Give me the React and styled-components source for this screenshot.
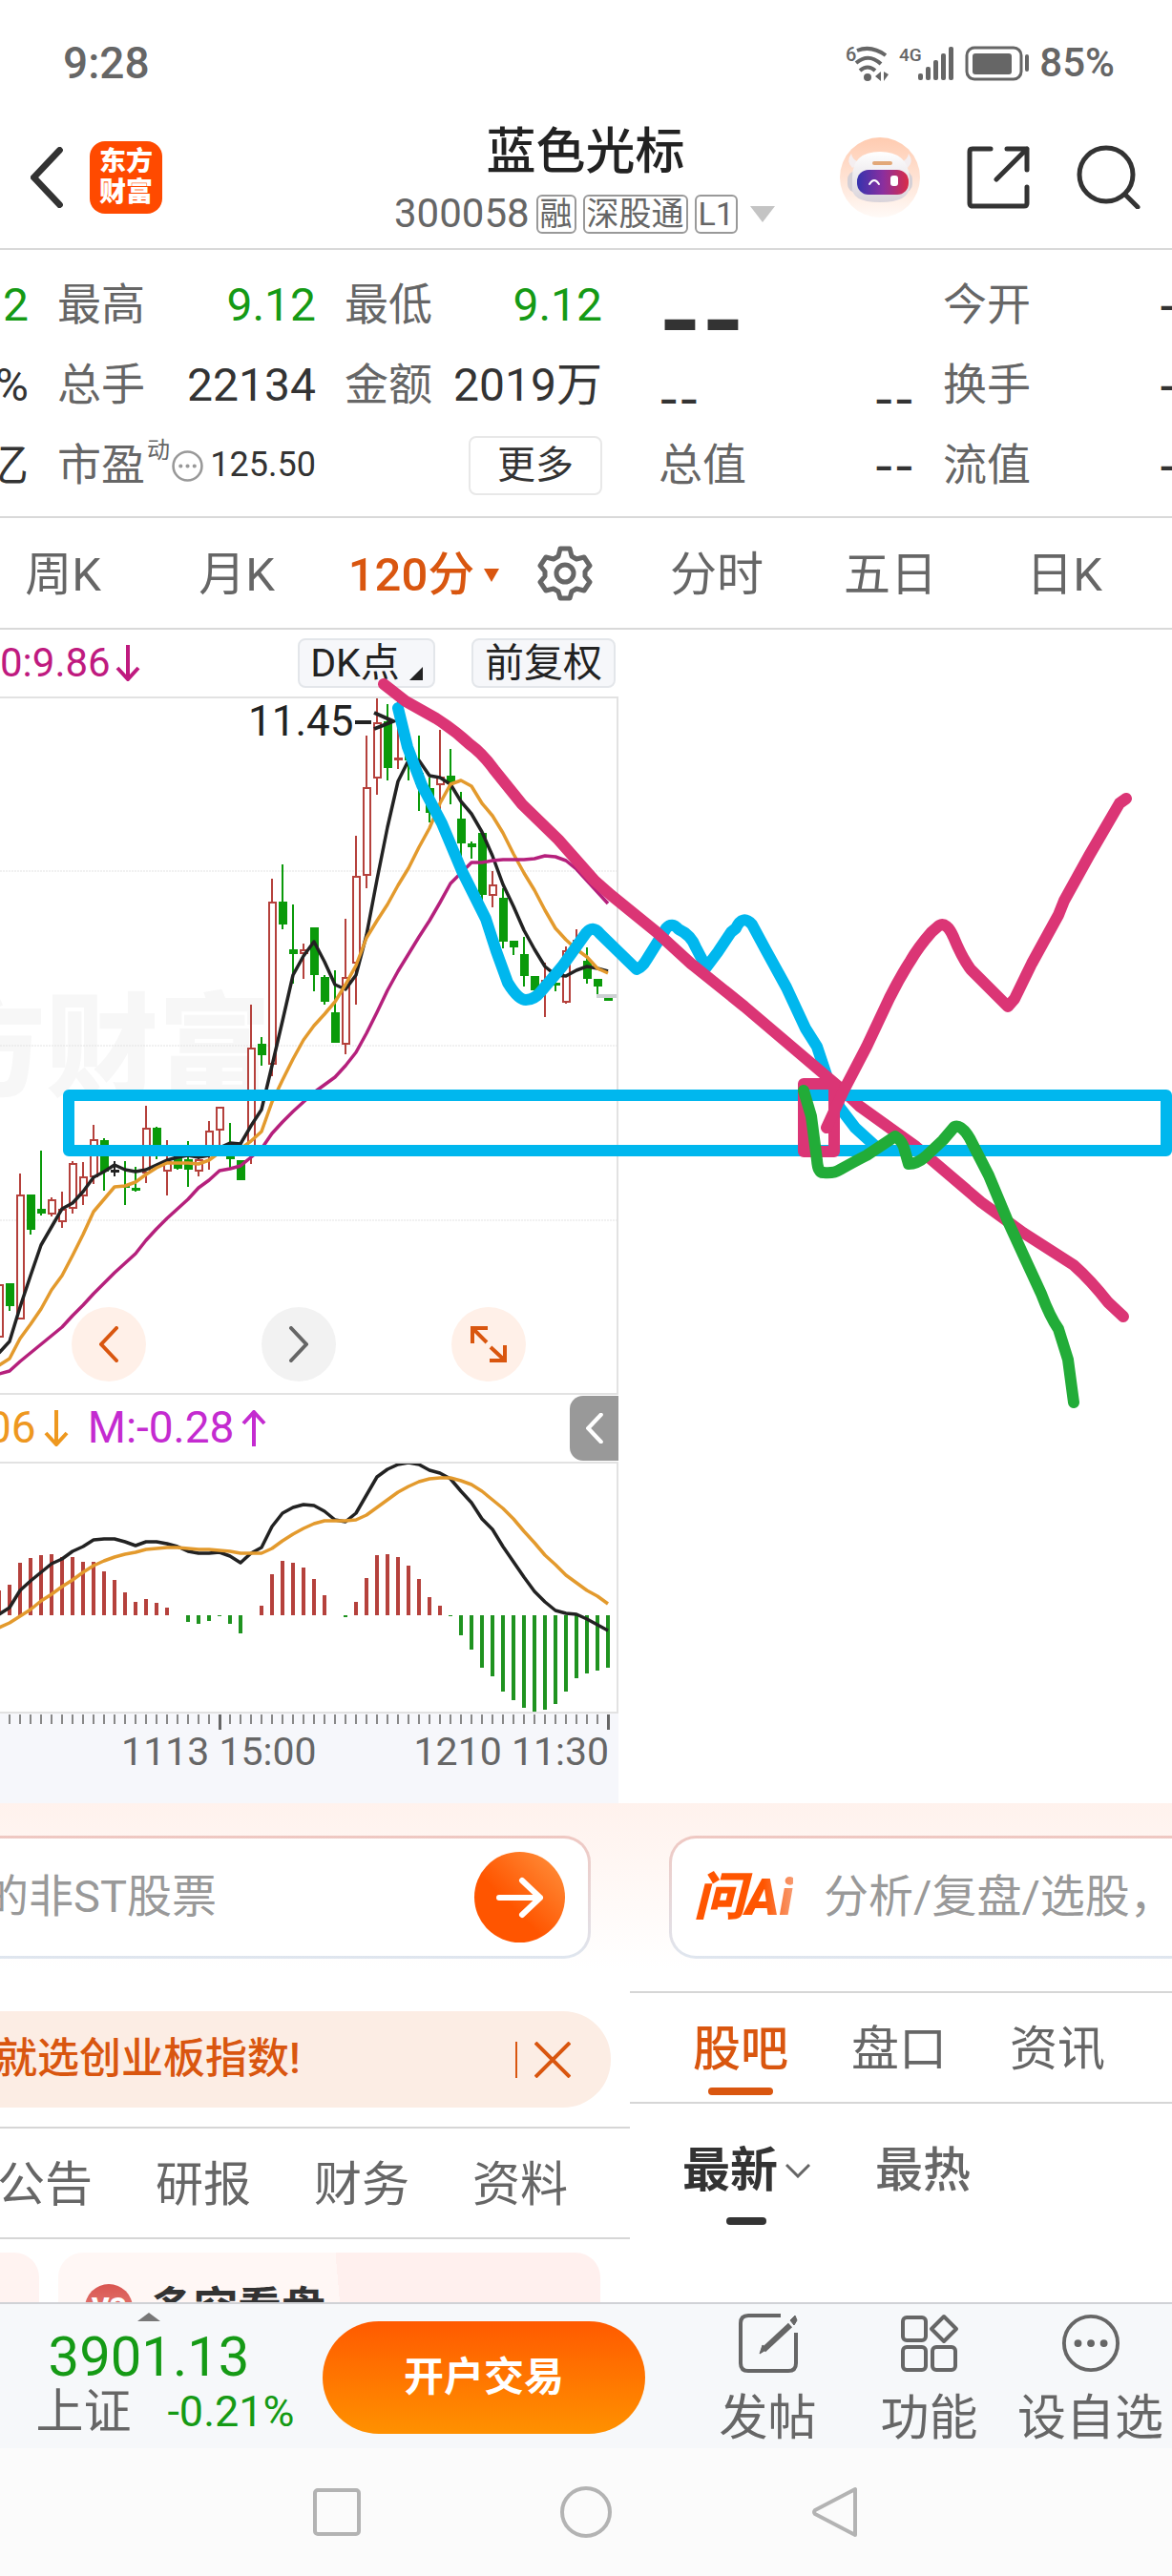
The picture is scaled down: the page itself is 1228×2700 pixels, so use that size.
import React from "react";
import styled, { createGlobalStyle } from "styled-components";

const GlobalStyle = createGlobalStyle`
  * {
    box-sizing: border-box;
  }

  body {
    margin: 0;
    background: #fff;
    color: #333;
    font-family: Roboto, "Noto Sans CJK SC", sans-serif;
    line-height: 1.2;
  }

  button,
  input {
    margin: 0;
    padding: 0;
    border: 0;
    background: none;
    color: inherit;
    font: inherit;
  }

  svg {
    display: block;
    flex-shrink: 0;
  }
`;

const Page = styled.div`
  overflow: hidden;
`;

const StatusBar = styled.div`
  display: flex;
  align-items: center;
  justify-content: space-between;
  height: 111px;
  padding: 22px 60px 0 66px;
  color: #666;
  font-size: 46px;
  font-weight: 500;
`;

const StatusIcons = styled.div`
  display: flex;
  align-items: center;
  gap: 10px;
  font-size: 42px;
`;

const Header = styled.header`
  display: grid;
  grid-template-columns: 1fr auto 1fr;
  align-items: center;
  height: 151px;
  padding: 0 33px 0 32px;
  border-bottom: 2px solid #d9d9d9;
`;

const HeaderSide = styled.div`
  display: flex;
  align-items: center;
  justify-content: ${(props) => (props.$end ? "flex-end" : "flex-start")};
  gap: ${(props) => (props.$end ? "49px" : "28px")};
`;

const IconButton = styled.button`
  display: flex;
  align-items: center;
  justify-content: center;
`;

const AppLogo = styled.a`
  width: 76px;
  padding: 6px 0;
  border-radius: 16px;
  background: #ff4a00;
  color: #fff;
  font-size: 28px;
  font-weight: 900;
  line-height: 32px;
  text-align: center;
  text-decoration: none;
`;

const StockTitle = styled.div`
  padding-top: 12px;

  h1 {
    margin: 0;
    color: #222;
    font-size: 52px;
    font-weight: 500;
    line-height: 66px;
    text-align: center;
  }
`;

const StockCode = styled.div`
  display: flex;
  align-items: center;
  gap: 7px;
  height: 64px;
  color: #666;
  font-size: 42px;
`;

const Tag = styled.span`
  padding: 0 2px;
  border: 2px solid #999;
  border-radius: 6px;
  font-size: 34px;
  line-height: 37px;
`;

const Columns = styled.div`
  display: grid;
  grid-template-columns: minmax(0, 660fr) minmax(0, 568fr);
`;

const Quotes = styled(Columns)`
  padding: 16px 0 11px;
  border-bottom: 2px solid #d9d9d9;
`;

const QuoteGrid = styled.dl`
  display: grid;
  grid-template-columns: ${(props) => props.$columns};
  grid-auto-rows: 84px;
  column-gap: 30px;
  margin: 0;
  padding-left: ${(props) => props.$indent || "0"};
`;

const Quote = styled.div`
  display: flex;
  align-items: center;
  justify-content: ${(props) => (props.$end ? "flex-end" : "space-between")};
  white-space: nowrap;

  dt {
    display: flex;
    align-items: center;
    color: #666;
    font-size: 46px;
  }

  dd {
    margin: 0;
    color: ${(props) => (props.$down ? "#159a15" : "#333")};
    font-size: ${(props) => (props.$small ? "36px" : "48px")};
  }
`;

const Sup = styled.sup`
  align-self: flex-start;
  margin: 0 2px;
  font-size: 24px;
  line-height: 24px;
`;

const Dash = styled.dd`
  && {
    align-self: ${(props) => (props.$low ? "flex-end" : "center")};
    font-family: Inter, sans-serif;
    font-size: ${(props) => (props.$big ? "96px" : "46px")};
    font-weight: ${(props) => (props.$big ? "700" : "500")};
    line-height: 56px;
  }
`;

const MoreCell = styled.dd`
  display: flex;
  align-items: center;
  justify-content: flex-end;
  margin: 0;
`;

const MoreButton = styled.button`
  width: 140px;
  height: 62px;
  border: 2px solid #e8e8e8;
  border-radius: 8px;
  color: #333;
  font-size: 40px;
`;

const PeriodBar = styled(Columns)`
  height: 117px;
  border-bottom: 2px solid #d9d9d9;
`;

const PeriodGroup = styled.nav`
  display: flex;
  align-items: center;
  margin-left: ${(props) => (props.$cut ? "-25px" : "0")};
`;

const Period = styled.button`
  display: flex;
  align-items: center;
  justify-content: center;
  gap: 10px;
  flex: 0 0 ${(props) => (props.$active ? "210px" : "182px")};
  padding-top: 5px;
  color: ${(props) => (props.$active ? "#d9560f" : "#666")};
  font-size: 49px;
  font-weight: ${(props) => (props.$active ? "500" : "400")};
`;

const GearButton = styled(IconButton)`
  margin-left: 14px;
`;

const ChartArea = styled.section`
  position: relative;
`;

const ChartPane = styled.div`
  padding-right: 12px;
`;

const ChartTools = styled.div`
  display: flex;
  align-items: center;
  height: 70px;
  padding-right: 3px;
`;

const Indicator = styled.span`
  display: flex;
  align-items: center;
  gap: ${(props) => (props.$tight ? "5px" : "8px")};
  color: ${(props) => props.$color};
  font-size: ${(props) => (props.$tight ? "42px" : "46px")};
`;

const ToolButton = styled.button`
  display: flex;
  align-items: flex-end;
  justify-content: center;
  gap: 10px;
  width: ${(props) => props.$width};
  height: 52px;
  margin-left: ${(props) => props.$gap};
  border: 2px solid #e3e6ea;
  border-radius: 8px;
  background: #f6f7fa;
  color: #222;
  font-size: 41px;
  line-height: 48px;

  svg {
    margin-bottom: 6px;
  }
`;

const PricePlot = styled.div`
  position: relative;
  border: solid #e2e2e2;
  border-width: 2px 2px 2px 0;
`;

const PlotButtons = styled.div`
  position: absolute;
  bottom: 12px;
  left: 75px;
  display: flex;
  gap: 121px;
`;

const PlotButton = styled(IconButton)`
  width: 78px;
  height: 78px;
  border-radius: 50%;
  background: ${(props) => (props.$muted ? "#f2f2f2" : "#fff0e8")};
`;

const MacdHead = styled.div`
  display: flex;
  align-items: center;
  gap: 20px;
  height: 70px;
  margin-left: -14px;
`;

const CollapseButton = styled(IconButton)`
  width: 51px;
  height: 68px;
  margin-left: auto;
  border-radius: 14px 0 0 14px;
  background: #999;
`;

const MacdPlot = styled.div`
  border: solid #e2e2e2;
  border-width: 2px 2px 2px 0;
`;

const Axis = styled.div`
  height: 94px;
  background: #f6f7fb;
`;

const AxisLabels = styled.div`
  display: flex;
  justify-content: flex-end;
  gap: 102px;
  padding-right: 10px;
  color: #666;
  font-size: 41px;
  line-height: 44px;
`;

const Annotations = styled.svg`
  position: absolute;
  top: 0;
  left: 0;
  width: 100%;
  height: 100%;
  pointer-events: none;
`;

const AskArea = styled(Columns)`
  background: linear-gradient(#fff2ed, #fff 174px);
`;

const AskBox = styled.label`
  display: flex;
  align-items: center;
  gap: 32px;
  height: 129px;
  margin: ${(props) => (props.$cut ? "34px 41px 34px -60px" : "34px -60px 34px 41px")};
  padding: ${(props) => (props.$cut ? "0 24px 0 40px" : "0 24px 0 23px")};
  border: 3px solid transparent;
  border-radius: 28px;
  background: linear-gradient(#fff, #fff) padding-box,
    linear-gradient(#efc8c2, #dfe6ef) border-box;

  input {
    flex: 1;
    min-width: 0;
    font-size: 47px;
    outline: none;
  }

  input::placeholder {
    color: #999;
    opacity: 1;
  }
`;

const SendButton = styled(IconButton)`
  width: 95px;
  height: 95px;
  border-radius: 50%;
  background: linear-gradient(45deg, #ff5500 40%, #ff9440);
`;

const AskLogo = styled.span`
  background: linear-gradient(90deg, #ff5500 70%, #f79a70);
  background-clip: text;
  color: transparent;
  font-size: 54px;
  font-style: italic;
  font-weight: 900;
  line-height: 70px;
`;

const NewsArea = styled(Columns)`
  height: 326px;
  overflow: hidden;
`;

const LeftNews = styled.div`
  padding-top: 21px;
`;

const Notice = styled.div`
  display: flex;
  align-items: center;
  height: 101px;
  margin: 0 20px 20px -60px;
  padding: 0 42px 0 55px;
  border-radius: 50px;
  background: #fcede4;
  color: #d9560f;
  font-size: 44px;
  font-weight: 500;
  white-space: nowrap;
`;

const NoticeClose = styled(IconButton)`
  margin-left: auto;
  padding-left: 18px;
  border-left: 2px solid #d9560f;
`;

const TabRow = styled.nav`
  display: flex;
  gap: 66px;
  height: 118px;
  margin-left: ${(props) => (props.$cut ? "-3px" : "0")};
  padding-left: ${(props) => (props.$cut ? "0" : "66px")};
  border: solid #d6d6d6;
  border-width: 2px 0;
`;

const TabCell = styled.a`
  display: flex;
  flex-direction: column;
  align-items: center;
  justify-content: space-between;
  flex-shrink: 0;
  padding: 25px 0 7px;
  color: ${(props) => (props.$active ? "#d9560f" : "#666")};
  font-size: 50px;
  font-weight: ${(props) => (props.$active ? "500" : "400")};
  line-height: 68px;
  text-decoration: none;
  white-space: nowrap;

  &::after {
    content: "";
    width: 68px;
    height: 8px;
    border-radius: 4px;
    background: ${(props) => (props.$active ? "#d9560f" : "transparent")};
  }
`;

const SortRow = styled.div`
  display: flex;
  gap: 68px;
  padding: 34px 0 0 55px;
`;

const SortButton = styled.button`
  display: flex;
  flex-direction: column;
  align-items: center;
  gap: 13px;
  color: ${(props) => (props.$active ? "#333" : "#666")};
  font-size: 50px;
  font-weight: ${(props) => (props.$active ? "700" : "500")};
  line-height: 72px;

  span {
    display: flex;
    align-items: center;
    gap: 8px;
  }

  &::after {
    content: "";
    width: 42px;
    height: 8px;
    border-radius: 4px;
    background: ${(props) => (props.$active ? "#333" : "transparent")};
  }
`;

const CardRow = styled.div`
  display: flex;
  gap: 20px;
  margin: 14px 31px 0 -100px;
`;

const Card = styled.article`
  display: flex;
  align-items: center;
  gap: 18px;
  flex: ${(props) => (props.$wide ? "1" : "0 0 141px")};
  height: 116px;
  padding: 0 28px;
  border-radius: 26px;
  background: ${(props) =>
    props.$wide ? "linear-gradient(85deg, #fff7f5 52%, #fff0ee 52%)" : "#fff3f1"};
  color: #333;

  h2 {
    margin: 0;
    font-size: 46px;
    font-weight: 700;
    line-height: 60px;
  }
`;

const VsBadge = styled.span`
  width: 50px;
  height: 50px;
  border-radius: 50%;
  background: linear-gradient(#d95550, #e8908a);
  color: #fff;
  font-size: 28px;
  font-weight: 900;
  line-height: 50px;
  text-align: center;
`;

const ActionBar = styled.footer`
  display: grid;
  grid-template-columns: 312px 338px minmax(0, 1fr);
  column-gap: 26px;
  height: 153px;
  border-top: 2px solid #d0d2d6;
  background: #f6f8fa;
`;

const IndexBlock = styled.div`
  display: flex;
  flex-direction: column;
  align-items: center;
  padding-top: 9px;
  color: #159a15;

  strong {
    font-size: 58px;
    font-weight: 400;
    line-height: 74px;
  }
`;

const IndexChange = styled.div`
  display: flex;
  align-items: center;
  gap: 38px;
  padding-left: 34px;
  font-size: 45px;
  line-height: 42px;

  span {
    color: #666;
    font-size: 50px;
  }
`;

const TradeButton = styled.button`
  align-self: center;
  height: 118px;
  border-radius: 59px;
  background: linear-gradient(#ff5a00, #ff9100);
  color: #fff;
  font-size: 42px;
  font-weight: 700;
`;

const Actions = styled.div`
  display: grid;
  grid-template-columns: repeat(3, 169px);
  margin-left: 18px;
`;

const Action = styled.button`
  display: flex;
  flex-direction: column;
  align-items: center;
  gap: 14px;
  padding-top: 10px;
  color: #666;
  font-size: 51px;
  line-height: 68px;
  white-space: nowrap;
`;

const SystemNav = styled.nav`
  display: flex;
  align-items: center;
  justify-content: center;
  gap: 209px;
  height: 134px;
  background: #fbfbfb;
`;

// candle k sits at x = 10 + 11 * k; each row is [kind, high, bodyTop, bodyBottom, low]
const STEP = 11;
const candleX = (index) => 10 + STEP * (index - 1);

const CANDLES = [
  ["r", 1346, 1346, 1402, 1402],
  ["g", 1345, 1345, 1369, 1374],
  ["r", 1230, 1252, 1383, 1383],
  ["g", 1252, 1252, 1289, 1294],
  ["g", 1206, 1267, 1272, 1274],
  ["r", 1255, 1257, 1273, 1275],
  ["r", 1249, 1267, 1281, 1287],
  ["r", 1217, 1219, 1267, 1272],
  ["r", 1218, 1233, 1254, 1263],
  ["r", 1179, 1194, 1234, 1241],
  ["g", 1193, 1195, 1228, 1248],
  ["k", 1217, 1226, 1228, 1233],
  ["g", 1217, 1242, 1244, 1263],
  ["g", 1223, 1245, 1247, 1249],
  ["r", 1159, 1182, 1230, 1240],
  ["g", 1181, 1182, 1210, 1215],
  ["r", 1195, 1217, 1228, 1253],
  ["g", 1205, 1212, 1225, 1226],
  ["g", 1196, 1215, 1226, 1244],
  ["r", 1210, 1215, 1228, 1233],
  ["r", 1175, 1185, 1210, 1226],
  ["r", 1160, 1160, 1185, 1207],
  ["g", 1177, 1208, 1215, 1224],
  ["g", 1216, 1216, 1237, 1237],
  ["r", 1053, 1098, 1212, 1220],
  ["g", 1087, 1094, 1106, 1117],
  ["r", 921, 945, 1116, 1128],
  ["g", 906, 945, 969, 974],
  ["g", 948, 995, 1000, 1031],
  ["r", 989, 995, 1000, 1026],
  ["g", 972, 972, 1022, 1039],
  ["g", 1022, 1024, 1050, 1053],
  ["g", 1017, 1061, 1093, 1093],
  ["r", 963, 1024, 1095, 1105],
  ["r", 876, 918, 1010, 1053],
  ["r", 771, 825, 918, 931],
  ["r", 731, 757, 816, 833],
  ["g", 738, 756, 805, 818],
  ["r", 733, 794, 797, 806],
  ["g", 777, 790, 797, 818],
  ["g", 771, 810, 822, 850],
  ["g", 815, 826, 852, 862],
  ["r", 765, 814, 823, 850],
  ["g", 785, 813, 822, 843],
  ["g", 830, 858, 884, 907],
  ["g", 882, 884, 888, 900],
  ["g", 872, 873, 938, 950],
  ["r", 913, 927, 939, 951],
  ["g", 931, 941, 987, 994],
  ["g", 986, 986, 993, 1001],
  ["g", 982, 1000, 1023, 1034],
  ["g", 1023, 1023, 1038, 1038],
  ["r", 1009, 1027, 1033, 1066],
  ["g", 1028, 1030, 1033, 1039],
  ["r", 992, 996, 1051, 1052],
  ["r", 974, 985, 995, 1000],
  ["g", 993, 1007, 1026, 1031],
  ["g", 1026, 1026, 1034, 1042],
  ["g", 1046, 1046, 1049, 1049],
];

const MA_FAST = [
  1418, 1406, 1370, 1337, 1305, 1286, 1267, 1261, 1249, 1234, 1228, 1221, 1226, 1228, 1226,
  1221, 1216, 1213, 1211, 1213, 1211, 1203, 1198, 1199, 1180, 1163, 1117, 1070, 1022, 1002,
  987, 1008, 1032, 1037, 1022, 980, 922, 867, 819, 797, 797, 813, 815, 822, 840, 853, 872,
  897, 927, 950, 975, 995, 1013, 1022, 1023, 1017, 1013, 1015, 1018,
];

const MA_MID = [
  1431, 1424, 1403, 1388, 1372, 1352, 1337, 1316, 1294, 1270, 1257, 1244, 1243, 1239, 1231,
  1224, 1219, 1219, 1219, 1220, 1216, 1208, 1207, 1204, 1196, 1186, 1155, 1132, 1110, 1090,
  1075, 1063, 1050, 1032, 1012, 983, 965, 948, 928, 910, 888, 868, 842, 822, 818, 824, 842,
  855, 873, 895, 915, 933, 954, 973, 985, 995, 1003, 1015, 1020,
];

const MA_SLOW = [
  1440, 1437, 1427, 1418, 1409, 1400, 1391, 1379, 1368, 1356, 1345, 1334, 1324, 1314, 1300,
  1288, 1277, 1267, 1257, 1245, 1237, 1227, 1225, 1222, 1213, 1204, 1188, 1176, 1165, 1155,
  1145, 1137, 1129, 1117, 1103, 1083, 1061, 1038, 1018, 1000, 982, 965, 946, 926, 915, 904,
  904, 902, 901, 901, 901, 900, 897, 898, 902, 911, 923, 935, 947,
];

const MACD_BARS = [
  26, 32, 55, 60, 63, 64, 61, 61, 56, 56, 46, 37, 24, 14, 17, 13, 8, 0, -7, -9, -6, -1, -9,
  -19, 0, 10, 43, 57, 55, 50, 38, 21, 0, -2, 14, 39, 63, 64, 61, 52, 38, 19, 10, -1, -21,
  -36, -55, -64, -80, -89, -97, -102, -99, -93, -80, -66, -61, -58, -55,
];

const DIF = [
  1692, 1685, 1667, 1657, 1648, 1639, 1634, 1626, 1621, 1614, 1613, 1613, 1616, 1620, 1616,
  1616, 1618, 1621, 1626, 1628, 1628, 1627, 1631, 1638, 1628, 1622, 1600, 1586, 1580, 1577,
  1578, 1584, 1593, 1595, 1586, 1567, 1548, 1540, 1535, 1533, 1535, 1541, 1544, 1550, 1563,
  1575, 1592, 1603, 1621, 1637, 1653, 1668, 1679, 1688, 1691, 1692, 1697, 1703, 1709,
];

const DEA = [
  1706, 1701, 1694, 1687, 1678, 1671, 1663, 1656, 1648, 1641, 1636, 1632, 1629, 1627, 1624,
  1623, 1622, 1622, 1623, 1624, 1624, 1625, 1626, 1628, 1628, 1628, 1623, 1615, 1608, 1602,
  1597, 1594, 1594, 1594, 1593, 1588, 1580, 1572, 1564, 1558, 1553, 1550, 1549, 1549, 1552,
  1556, 1563, 1572, 1581, 1592, 1605, 1617, 1630, 1640, 1651, 1659, 1667, 1673, 1681,
];

const COLORS = { r: "#b5413c", g: "#0a9a0a", k: "#222" };

const toPoints = (values) => values.map((y, i) => `${candleX(i)},${y}`).join(" ");

const Line = ({ values, color }) => (
  <polyline
    points={toPoints(values)}
    fill="none"
    stroke={color}
    strokeWidth="3.5"
    strokeLinejoin="round"
  />
);

const Candle = ({ x, data }) => {
  const [kind, high, top, bottom, low] = data;
  const color = COLORS[kind];

  return (
    <g stroke={color} strokeWidth="2">
      {high < top && <line x1={x} x2={x} y1={high} y2={top} />}
      {low > bottom && <line x1={x} x2={x} y1={bottom} y2={low} />}
      <rect
        x={x - 3}
        y={top + 1}
        width="7"
        height={Math.max(bottom - top - 2, 1)}
        fill={kind === "r" ? "#fff" : color}
      />
    </g>
  );
};

const PriceChart = () => (
  <svg viewBox="0 732 646 728" width="100%" preserveAspectRatio="xMaxYMin slice">
    <text
      x="-70"
      y="1140"
      fill="#f7f7f7"
      fontFamily="Noto Sans CJK SC"
      fontSize="118"
      fontWeight="900"
    >
      方财富
    </text>
    {[913, 1096, 1279].map((y) => (
      <line key={y} x1="0" x2="646" y1={y} y2={y} stroke="#e3e3e3" strokeDasharray="2 1" />
    ))}
    {CANDLES.map((data, i) => (
      <Candle key={i} x={candleX(i)} data={data} />
    ))}
    <rect x="625" y="1042" width="22" height="4" fill="#ccd0d2" />
    <Line values={MA_FAST} color="#222" />
    <Line values={MA_MID} color="#e39a2d" />
    <Line values={MA_SLOW} color="#b5207c" />
    <text x="260" y="771" fill="#222" fontFamily="Roboto" fontSize="44">
      11.45
    </text>
    <path d="M372 757h17M392 747l20 9-20 8" fill="none" stroke="#222" strokeWidth="4" />
  </svg>
);

const MacdChart = () => (
  <svg viewBox="0 1534 646 260" width="100%" preserveAspectRatio="xMaxYMin slice">
    {MACD_BARS.map((value, i) => (
      <rect
        key={i}
        x={candleX(i) - 2}
        y={value > 0 ? 1693 - value : 1693}
        width="4"
        height={Math.abs(value)}
        fill={value > 0 ? "#b5413c" : "#1f9320"}
      />
    ))}
    <Line values={DIF} color="#222" />
    <Line values={DEA} color="#e39a2d" />
  </svg>
);

const AxisTicks = () => (
  <svg viewBox="0 0 648 18" width="100%">
    {CANDLES.map((_, i) => {
      const major = i === 21 || i === 58;
      return (
        <rect
          key={i}
          x={candleX(i) - 1}
          y="1"
          width={major ? 3 : 2}
          height={major ? 16 : 10}
          fill={major ? "#666" : "#888"}
        />
      );
    })}
  </svg>
);

const Drawing = () => (
  <Annotations viewBox="0 660 1228 1230" preserveAspectRatio="xMinYMin meet">
    <g fill="none" strokeWidth="12" strokeLinecap="round" strokeLinejoin="round">
      <path
        stroke="#00b7ee"
        d="M417 742L427 783L442 823L463 863L484 913L509 963L520 997L532 1030Q543 1048 551 1048Q560 1048 567 1039L589 1013L614 978Q621 969 629 979L667 1016Q673 1014 678 1005L698 973Q704 966 711 974Q724 980 729 993L740 1014L752 998L766 977L771 973Q778 958 788 969L802 995L824 1035L844 1078L856 1097L866 1127L880 1161L896 1182L918 1202"
      />
      <path
        stroke="#db3575"
        d="M402 717L425 735L457 753Q476 765 492 780Q506 790 518 807L547 843L585 880L623 923L640 938L688 977L724 1010L780 1055L840 1106L880 1140L900 1159L960 1202L1028 1260L1072 1292L1125 1326Q1143 1342 1161 1365L1177 1380"
      />
      <rect stroke="#00b7ee" x="72" y="1148" width="1150" height="58" />
      <rect stroke="#db3575" x="842" y="1136" width="32" height="71" />
      <path
        stroke="#db3575"
        d="M866 1182L884 1143L908 1097L932 1046Q943 1024 954 1007Q962 993 976 977L984 970Q992 966 999 982Q1008 1004 1017 1016L1056 1055L1063 1047L1081 1010L1109 959L1115 944L1141 897L1173 842L1180 837"
      />
      <path
        stroke="#22ac38"
        d="M842 1143L850 1170L856 1216Q857 1230 863 1229Q874 1230 880 1226Q898 1216 908 1211L938 1191Q946 1196 948 1206L952 1220Q961 1220 970 1212L988 1195L1000 1181Q1007 1178 1016 1193L1036 1232L1056 1280L1073 1317L1091 1356Q1100 1380 1109 1393L1119 1425L1125 1470"
      />
    </g>
  </Annotations>
);

const Arrow = ({ up }) => (
  <svg width="26" height="38" viewBox="0 0 26 38" fill="none" stroke="currentColor" strokeWidth="4">
    <path d={up ? "M13 38V2M2 14L13 2l11 12" : "M13 0v36M2 24l11 12 11-12"} />
  </svg>
);

const WifiIcon = () => (
  <svg width="46" height="38" viewBox="0 0 46 38" fill="none" stroke="#666" strokeWidth="4">
    <text x="0" y="17" fill="#666" stroke="none" fontSize="20" fontFamily="Roboto" fontWeight="500">
      6
    </text>
    <path d="M12 6q15-6 30 5M11 19q13-11 26 1M15 27q8-7 16 0" />
    <circle cx="23" cy="34" r="4" fill="#666" stroke="none" />
    <path d="M37 28v10l-6-5zM40 38V28l5 3z" fill="#666" stroke="none" />
  </svg>
);

const SignalIcon = () => (
  <svg width="59" height="38" viewBox="0 0 59 38" fill="#666">
    <text x="0" y="17" fontSize="19" fontFamily="Roboto" fontWeight="500">
      4G
    </text>
    {[7, 14, 21, 28, 35].map((height, i) => (
      <rect key={height} x={20 + i * 8} y={37 - height} width="5" height={height} rx="2" />
    ))}
  </svg>
);

const BatteryIcon = () => (
  <svg width="68" height="38" viewBox="0 0 68 38">
    <rect x="2" y="3" width="57" height="33" rx="8" fill="none" stroke="#666" strokeWidth="3" />
    <rect x="8" y="9" width="41" height="22" rx="3" fill="#666" />
    <rect x="63" y="10" width="4" height="18" rx="2" fill="#666" />
  </svg>
);

const RobotIcon = () => (
  <svg width="84" height="84" viewBox="0 0 84 84">
    <defs>
      <linearGradient id="halo" x1="0" y1="0" x2="0" y2="1">
        <stop offset="0" stopColor="#ffcbb0" />
        <stop offset="1" stopColor="#fffaf7" />
      </linearGradient>
      <linearGradient id="shell" x1="0" y1="0" x2="0" y2="1">
        <stop offset="0" stopColor="#ffffff" />
        <stop offset="1" stopColor="#d9d3da" />
      </linearGradient>
      <linearGradient id="visor" x1="0" y1="0" x2="1" y2="0">
        <stop offset="0" stopColor="#3533ae" />
        <stop offset="0.5" stopColor="#8a2f9f" />
        <stop offset="1" stopColor="#d92c48" />
      </linearGradient>
    </defs>
    <circle cx="42" cy="42" r="42" fill="url(#halo)" />
    <path d="M12 17q-6 8 1 15l8-6q-8-2-9-9zM72 17q6 8-1 15l-8-6q8-2 9-9z" fill="#f4eef0" />
    <rect x="8" y="35" width="68" height="23" rx="9" fill="#d5d0d6" />
    <path
      d="M13 42q0-27 29-27t31 27v9q0 17-31 17T13 51z"
      fill="url(#shell)"
    />
    <rect x="18" y="34" width="54" height="26" rx="12" fill="url(#visor)" />
    <path d="M31 49q5-8 10 0" stroke="#fff" strokeWidth="2" fill="none" strokeLinecap="round" />
    <rect x="53" y="40" width="8" height="11" rx="3" fill="#fff" />
    <rect x="34" y="25" width="21" height="4" rx="2" fill="#e2a878" />
  </svg>
);

const ShareIcon = () => (
  <svg width="66" height="66" viewBox="0 0 66 66" fill="none" stroke="#333" strokeWidth="5" strokeLinecap="round" strokeLinejoin="round">
    <path d="M25 3H6Q3 3 3 6v54q0 3 3 3h54q3 0 3-3V43" />
    <path d="M42 3h21v22M63 3L31 35" />
  </svg>
);

const SearchIcon = () => (
  <svg width="67" height="67" viewBox="0 0 67 67" fill="none" stroke="#333" strokeWidth="5" strokeLinecap="round">
    <circle cx="31" cy="31" r="28" />
    <path d="M52 53l12 12" />
  </svg>
);

const MoreDots = ({ size, stroke, color }) => (
  <svg width={size} height={size} viewBox="0 0 64 64" fill="none" stroke={color} strokeWidth={stroke}>
    <circle cx="32" cy="32" r="29" />
    <path d="M18 32h.1M32 32h.1M46 32h.1" strokeWidth="8" strokeLinecap="round" />
  </svg>
);

const GearIcon = () => (
  <svg width="58" height="58" viewBox="0 0 58 58" fill="none" stroke="#666" strokeWidth="5" strokeLinejoin="round">
    <path d="M24 3h10l2 8 5 3 8-2 6 9-5 6v5l5 6-6 9-8-2-5 3-2 7H24l-2-7-5-3-8 2-6-9 5-6v-5l-5-6 6-9 8 2 5-3z" />
    <circle cx="29" cy="29" r="9" />
  </svg>
);

const Chevron = ({ right, color, width = 20, height = 38, stroke = 4 }) => (
  <svg width={width} height={height} viewBox="0 0 20 38" fill="none" stroke={color} strokeWidth={stroke} strokeLinecap="round">
    <path d={right ? "M2 2l16 17L2 36" : "M18 2L2 19l16 17"} />
  </svg>
);

const ACTIONS = [
  {
    label: "发帖",
    icon: (
      <svg width="62" height="62" viewBox="0 0 62 62" fill="none" stroke="#666" strokeWidth="4">
        <path d="M44 2H10Q2 2 2 10v42q0 8 8 8h42q8 0 8-8V20" />
        <path d="M26 38L54 12" strokeWidth="6" />
        <path d="M22 42l8-5-5-4zM54 7l5-5 2 5-3 5z" fill="#666" strokeWidth="1" />
      </svg>
    ),
  },
  {
    label: "功能",
    icon: (
      <svg width="62" height="62" viewBox="0 0 62 62" fill="none" stroke="#666" strokeWidth="4">
        <rect x="3" y="4" width="24" height="24" rx="4" />
        <rect x="3" y="35" width="24" height="24" rx="4" />
        <rect x="34" y="35" width="24" height="24" rx="4" />
        <path d="M46 3l13 13-13 13-13-13z" strokeLinejoin="round" />
      </svg>
    ),
  },
  { label: "设自选", icon: <MoreDots size="62" stroke="4" color="#666" /> },
];

const App = () => (
  <Page>
    <GlobalStyle />

    <StatusBar>
      <span>9:28</span>
      <StatusIcons>
        <WifiIcon />
        <SignalIcon />
        <BatteryIcon />
        <span>85%</span>
      </StatusIcons>
    </StatusBar>

    <Header>
      <HeaderSide>
        <IconButton aria-label="返回">
          <Chevron color="#333" width={34} height={64} />
        </IconButton>
        <AppLogo href="#home">
          东方
          <br />
          财富
        </AppLogo>
      </HeaderSide>
      <StockTitle>
        <h1>蓝色光标</h1>
        <StockCode>
          <span>300058</span>
          <Tag>融</Tag>
          <Tag>深股通</Tag>
          <Tag>L1</Tag>
          <svg width="34" height="18" viewBox="0 0 34 18" fill="#c4c4c4">
            <path d="M6 0h26L19 17z" />
          </svg>
        </StockCode>
      </StockTitle>
      <HeaderSide $end>
        <IconButton aria-label="智能助手">
          <RobotIcon />
        </IconButton>
        <IconButton aria-label="分享">
          <ShareIcon />
        </IconButton>
        <IconButton aria-label="搜索">
          <SearchIcon />
        </IconButton>
      </HeaderSide>
    </Header>

    <Quotes>
      <QuoteGrid $columns="30px 271px 270px">
        <Quote $end $down>
          <dd>2</dd>
        </Quote>
        <Quote $down>
          <dt>最高</dt>
          <dd>9.12</dd>
        </Quote>
        <Quote $down>
          <dt>最低</dt>
          <dd>9.12</dd>
        </Quote>
        <Quote $end>
          <dd>%</dd>
        </Quote>
        <Quote>
          <dt>总手</dt>
          <dd>22134</dd>
        </Quote>
        <Quote>
          <dt>金额</dt>
          <dd>2019万</dd>
        </Quote>
        <Quote $end>
          <dd>亿</dd>
        </Quote>
        <Quote $small>
          <dt>
            市盈<Sup>动</Sup>
            <MoreDots size="33" stroke="5" color="#999" />
          </dt>
          <dd>125.50</dd>
        </Quote>
        <MoreCell>
          <MoreButton>更多</MoreButton>
        </MoreCell>
      </QuoteGrid>
      <QuoteGrid $columns="268px 268px" $indent="30px">
        <Quote>
          <Dash $big $low>
            --
          </Dash>
        </Quote>
        <Quote>
          <dt>今开</dt>
          <Dash>--</Dash>
        </Quote>
        <Quote>
          <Dash $low>--</Dash>
          <Dash $low>--</Dash>
        </Quote>
        <Quote>
          <dt>换手</dt>
          <Dash>--</Dash>
        </Quote>
        <Quote>
          <dt>总值</dt>
          <Dash>--</Dash>
        </Quote>
        <Quote>
          <dt>流值</dt>
          <Dash>--</Dash>
        </Quote>
      </QuoteGrid>
    </Quotes>

    <PeriodBar>
      <PeriodGroup $cut>
        <Period>周K</Period>
        <Period>月K</Period>
        <Period $active>
          120分
          <svg width="16" height="14" viewBox="0 0 16 14" fill="#d9560f">
            <path d="M0 0h16L8 14z" />
          </svg>
        </Period>
        <GearButton aria-label="设置">
          <GearIcon />
        </GearButton>
      </PeriodGroup>
      <PeriodGroup>
        <Period>分时</Period>
        <Period>五日</Period>
        <Period>日K</Period>
      </PeriodGroup>
    </PeriodBar>

    <ChartArea>
      <Columns>
        <ChartPane>
          <ChartTools>
            <Indicator $color="#bf1a7f" $tight>
              0:9.86
              <Arrow />
            </Indicator>
            <ToolButton $width="144px" $gap="auto">
              DK点
              <svg width="14" height="14" viewBox="0 0 14 14" fill="#222">
                <path d="M14 0v14H0z" />
              </svg>
            </ToolButton>
            <ToolButton $width="151px" $gap="38px">
              前复权
            </ToolButton>
          </ChartTools>
          <PricePlot>
            <PriceChart />
            <PlotButtons>
              <PlotButton aria-label="向左">
                <Chevron color="#d9560f" />
              </PlotButton>
              <PlotButton aria-label="向右" $muted>
                <Chevron right color="#666" />
              </PlotButton>
              <PlotButton aria-label="全屏">
                <svg width="40" height="40" viewBox="0 0 40 40" fill="none" stroke="#d9560f" strokeWidth="4">
                  <path d="M3 19V3h16M4 4l14 14M37 21v16H21M36 36L22 23" />
                </svg>
              </PlotButton>
            </PlotButtons>
          </PricePlot>
          <MacdHead>
            <Indicator $color="#ee981f">
              06
              <Arrow />
            </Indicator>
            <Indicator $color="#c42bd0">
              M:-0.28
              <Arrow up />
            </Indicator>
            <CollapseButton aria-label="收起">
              <Chevron color="#fff" width={18} height={32} stroke={5} />
            </CollapseButton>
          </MacdHead>
          <MacdPlot>
            <MacdChart />
          </MacdPlot>
          <Axis>
            <AxisTicks />
            <AxisLabels>
              <span>1113 15:00</span>
              <span>1210 11:30</span>
            </AxisLabels>
          </Axis>
        </ChartPane>
      </Columns>
      <Drawing />
    </ChartArea>

    <AskArea>
      <AskBox $cut>
        <input type="text" aria-label="选股提问" placeholder="的非ST股票" />
        <SendButton aria-label="发送">
          <svg width="50" height="44" viewBox="0 0 50 44" fill="none" stroke="#fff" strokeWidth="6" strokeLinecap="round" strokeLinejoin="round">
            <path d="M3 22h43M27 4l19 18-19 18" />
          </svg>
        </SendButton>
      </AskBox>
      <AskBox>
        <AskLogo>问Ai</AskLogo>
        <input type="text" aria-label="问Ai" placeholder="分析/复盘/选股，" />
      </AskBox>
    </AskArea>

    <NewsArea>
      <LeftNews>
        <Notice>
          就选创业板指数!
          <NoticeClose aria-label="关闭">
            <svg width="38" height="38" viewBox="0 0 38 38" stroke="#d9560f" strokeWidth="4">
              <path d="M1 1l36 36M37 1L1 37" />
            </svg>
          </NoticeClose>
        </Notice>
        <TabRow $cut>
          <TabCell href="#gonggao">公告</TabCell>
          <TabCell href="#yanbao">研报</TabCell>
          <TabCell href="#caiwu">财务</TabCell>
          <TabCell href="#ziliao">资料</TabCell>
        </TabRow>
        <CardRow>
          <Card />
          <Card $wide>
            <VsBadge>VS</VsBadge>
            <h2>多空看盘</h2>
          </Card>
        </CardRow>
      </LeftNews>
      <div>
        <TabRow>
          <TabCell href="#guba" $active>
            股吧
          </TabCell>
          <TabCell href="#pankou">盘口</TabCell>
          <TabCell href="#zixun">资讯</TabCell>
        </TabRow>
        <SortRow>
          <SortButton $active>
            <span>
              最新
              <svg width="26" height="16" viewBox="0 0 26 16" fill="none" stroke="#666" strokeWidth="3">
                <path d="M1 2l12 12L25 2" />
              </svg>
            </span>
          </SortButton>
          <SortButton>
            <span>最热</span>
          </SortButton>
        </SortRow>
      </div>
    </NewsArea>

    <ActionBar>
      <IndexBlock>
        <svg width="24" height="9" viewBox="0 0 24 9" fill="#777">
          <path d="M12 0l12 9H0z" />
        </svg>
        <strong>3901.13</strong>
        <IndexChange>
          <span>上证</span>
          -0.21%
        </IndexChange>
      </IndexBlock>
      <TradeButton>开户交易</TradeButton>
      <Actions>
        {ACTIONS.map(({ label, icon }) => (
          <Action key={label}>
            {icon}
            {label}
          </Action>
        ))}
      </Actions>
    </ActionBar>

    <SystemNav>
      <IconButton aria-label="最近任务">
        <svg width="50" height="50" viewBox="0 0 50 50" fill="none" stroke="#b3b3b3" strokeWidth="4">
          <rect x="2" y="2" width="46" height="46" rx="3" />
        </svg>
      </IconButton>
      <IconButton aria-label="主屏幕">
        <svg width="54" height="54" viewBox="0 0 54 54" fill="none" stroke="#b3b3b3" strokeWidth="4">
          <circle cx="27" cy="27" r="25" />
        </svg>
      </IconButton>
      <IconButton aria-label="后退">
        <svg width="50" height="54" viewBox="0 0 50 54" fill="none" stroke="#b3b3b3" strokeWidth="4" strokeLinejoin="round">
          <path d="M46 3v48L4 29q-2-2 0-4z" />
        </svg>
      </IconButton>
    </SystemNav>
  </Page>
);

export default App;
